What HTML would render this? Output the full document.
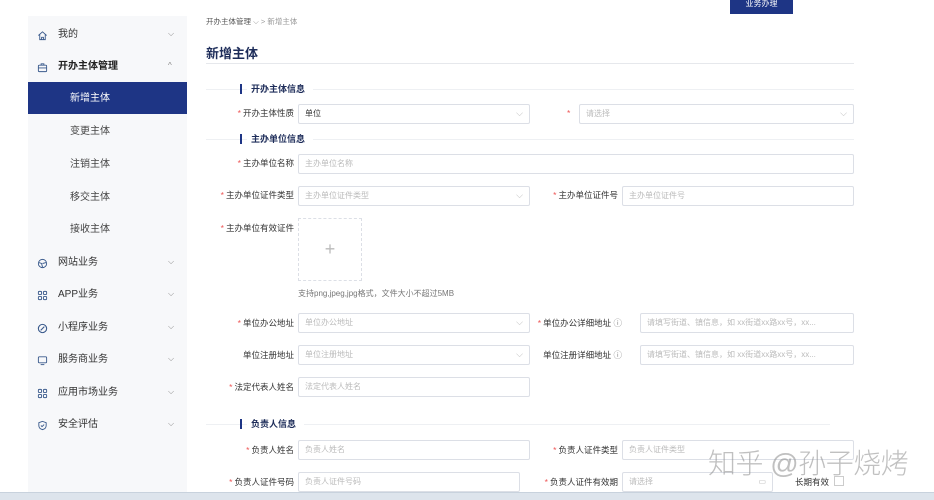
<!DOCTYPE html>
<html><head><meta charset="utf-8"><style>
*{margin:0;padding:0;box-sizing:border-box}
body{width:934px;height:500px;overflow:hidden;background:#fff;position:relative;font-family:"Liberation Sans","Noto Sans CJK SC",sans-serif;color:#333}
.a{position:absolute;white-space:nowrap}
.sb{position:absolute;left:28px;top:16px;width:159px;height:476px;background:#f7f8fa}
.mi{position:absolute;left:58px;font-size:10px;color:#333;line-height:14px;margin-top:2px}
.sub{position:absolute;left:70px;font-size:10px;color:#444;line-height:14px;margin-top:2px}
.ch{position:absolute;left:168px;font-size:8px;color:#888;margin-top:2px}
.ic{position:absolute;left:37px;width:11px;height:11px;margin-top:2px}
.lb{position:absolute;font-size:8.5px;color:#333;line-height:12px;text-align:right}
.lb i{color:#e55;font-style:normal;margin-right:2px}
.in{position:absolute;height:20px;border:1px solid #dcdfe6;border-radius:2px;font-size:8px;color:#bbb;padding-left:6px;line-height:18px;background:#fff}
.in.s::after{content:"⌵";position:absolute;right:6px;top:-1px;color:#bbb;font-size:9px}
.sec{position:absolute;left:206px;width:648px;height:1px;background:#eef0f3}
.st{position:absolute;font-size:9px;font-weight:bold;color:#1e2d5a;background:#fff;padding:0 8px 0 4px;line-height:12px}
.bar{position:absolute;width:2px;height:10px;background:#1e3585}
</style></head><body>
<div class="a" style="left:730px;top:0;width:63px;height:14px;background:#1e3585;color:#fff;font-size:8px;text-align:center;line-height:8px">业务办理</div>

<div class="sb"></div>
<svg class="ic" style="top:28px" viewBox="0 0 12 12" fill="none" stroke="#3a5a8c" stroke-width="1"><path d="M1.5 6L6 2l4.5 4M3 5v5.5h6V5M5 10.5V8h2v2.5"/></svg>
<div class="mi" style="top:26px">我的</div><div class="ch" style="top:27px">⌵</div>
<svg class="ic" style="top:60px" viewBox="0 0 12 12" fill="none" stroke="#3a5a8c" stroke-width="1"><rect x="1.5" y="3.5" width="9" height="7" rx="1"/><path d="M4.5 3.5V2h3v1.5M1.5 6.5h9"/></svg>
<div class="mi" style="top:58px;font-weight:bold;color:#222">开办主体管理</div><div class="ch" style="top:59px">^</div>
<div class="a" style="left:28px;top:82px;width:159px;height:32px;background:#1e3585"></div>
<div class="sub" style="top:90px;color:#fff">新增主体</div>
<div class="sub" style="top:123px">变更主体</div>
<div class="sub" style="top:156px">注销主体</div>
<div class="sub" style="top:189px">移交主体</div>
<div class="sub" style="top:221px">接收主体</div>
<svg class="ic" style="top:256px" viewBox="0 0 12 12" fill="none" stroke="#3a5a8c" stroke-width="1"><circle cx="6" cy="6" r="4.5"/><path d="M2 5l3 1 1 4M6 6l4-1"/></svg>
<div class="mi" style="top:254px">网站业务</div><div class="ch" style="top:255px">⌵</div>
<svg class="ic" style="top:288px" viewBox="0 0 12 12" fill="none" stroke="#3a5a8c" stroke-width="1"><rect x="1.5" y="1.5" width="3.5" height="3.5" rx="1"/><rect x="7" y="1.5" width="3.5" height="3.5" rx="1"/><rect x="1.5" y="7" width="3.5" height="3.5" rx="1"/><rect x="7" y="7" width="3.5" height="3.5" rx="1"/></svg>
<div class="mi" style="top:286px">APP业务</div><div class="ch" style="top:287px">⌵</div>
<svg class="ic" style="top:321px" viewBox="0 0 12 12" fill="none" stroke="#3a5a8c" stroke-width="1.2"><circle cx="6" cy="6" r="4.5"/><path d="M4 8l4-4"/></svg>
<div class="mi" style="top:319px">小程序业务</div><div class="ch" style="top:320px">⌵</div>
<svg class="ic" style="top:353px" viewBox="0 0 12 12" fill="none" stroke="#3a5a8c" stroke-width="1"><rect x="1.5" y="2" width="9" height="6.5" rx="1"/><path d="M4 10.5h4"/></svg>
<div class="mi" style="top:351px">服务商业务</div><div class="ch" style="top:352px">⌵</div>
<svg class="ic" style="top:386px" viewBox="0 0 12 12" fill="none" stroke="#3a5a8c" stroke-width="1"><rect x="1.5" y="1.5" width="3.5" height="3.5" rx="1"/><rect x="7" y="1.5" width="3.5" height="3.5" rx="1"/><rect x="1.5" y="7" width="3.5" height="3.5" rx="1"/><rect x="7" y="7" width="3.5" height="3.5" rx="1"/></svg>
<div class="mi" style="top:384px">应用市场业务</div><div class="ch" style="top:385px">⌵</div>
<svg class="ic" style="top:418px" viewBox="0 0 12 12" fill="none" stroke="#3a5a8c" stroke-width="1"><path d="M6 1.5l4 1.5v3c0 2.5-2 4-4 4.5C4 10 2 8.5 2 6V3z"/><path d="M4.3 6l1.2 1.2L7.8 5"/></svg>
<div class="mi" style="top:416px">安全评估</div><div class="ch" style="top:417px">⌵</div>

<div class="a" style="left:206px;top:16px;font-size:7.5px;color:#555">开办主体管理 <span style="color:#999">⌵ &gt;</span> <span style="color:#999">新增主体</span></div>
<div class="a" style="left:206px;top:43px;font-size:13px;font-weight:bold;color:#1e2d5a">新增主体</div>
<div class="a" style="left:206px;top:63px;width:648px;height:1px;background:#e6e8ec"></div>

<div class="sec" style="top:89px"></div><div class="bar" style="left:240px;top:84px"></div><div class="st" style="left:247px;top:83px">开办主体信息</div>
<div class="lb" style="right:640px;top:107px"><i>*</i>开办主体性质</div>
<div class="in s" style="left:298px;top:104px;width:232px;color:#333">单位</div>
<div class="lb" style="left:567px;top:107px"><i>*</i></div>
<div class="in s" style="left:579px;top:104px;width:275px">请选择</div>

<div class="sec" style="top:139px"></div><div class="bar" style="left:240px;top:134px"></div><div class="st" style="left:247px;top:133px">主办单位信息</div>
<div class="lb" style="right:640px;top:157px"><i>*</i>主办单位名称</div>
<div class="in" style="left:298px;top:154px;width:556px">主办单位名称</div>
<div class="lb" style="right:640px;top:189px"><i>*</i>主办单位证件类型</div>
<div class="in s" style="left:298px;top:186px;width:232px">主办单位证件类型</div>
<div class="lb" style="right:316px;top:189px"><i>*</i>主办单位证件号</div>
<div class="in" style="left:622px;top:186px;width:232px">主办单位证件号</div>
<div class="lb" style="right:640px;top:222px"><i>*</i>主办单位有效证件</div>
<div class="a" style="left:298px;top:218px;width:64px;height:63px;border:1px dashed #dcdfe6;color:#bbb;font-size:18px;text-align:center;line-height:60px;font-weight:200">+</div>
<div class="a" style="left:298px;top:288px;font-size:8px;color:#777">支持png,jpeg,jpg格式，文件大小不超过5MB</div>

<div class="lb" style="right:640px;top:317px"><i>*</i>单位办公地址</div>
<div class="in s" style="left:298px;top:313px;width:232px">单位办公地址</div>
<div class="lb" style="right:312px;top:317px"><i>*</i>单位办公详细地址 <span style="color:#888">ⓘ</span></div>
<div class="in" style="left:640px;top:313px;width:214px">请填写街道、镇信息，如 xx街道xx路xx号，xx...</div>
<div class="lb" style="right:640px;top:349px">单位注册地址</div>
<div class="in s" style="left:298px;top:345px;width:232px">单位注册地址</div>
<div class="lb" style="right:312px;top:349px">单位注册详细地址 <span style="color:#888">ⓘ</span></div>
<div class="in" style="left:640px;top:345px;width:214px">请填写街道、镇信息，如 xx街道xx路xx号，xx...</div>
<div class="lb" style="right:640px;top:381px"><i>*</i>法定代表人姓名</div>
<div class="in" style="left:298px;top:377px;width:232px">法定代表人姓名</div>

<div class="sec" style="top:424px;width:624px"></div><div class="bar" style="left:240px;top:419px"></div><div class="st" style="left:247px;top:418px">负责人信息</div>
<div class="lb" style="right:640px;top:444px"><i>*</i>负责人姓名</div>
<div class="in" style="left:298px;top:440px;width:232px">负责人姓名</div>
<div class="lb" style="right:316px;top:444px"><i>*</i>负责人证件类型</div>
<div class="in" style="left:622px;top:440px;width:232px">负责人证件类型</div>
<div class="lb" style="right:640px;top:476px"><i>*</i>负责人证件号码</div>
<div class="in" style="left:298px;top:472px;width:222px">负责人证件号码</div>
<div class="lb" style="right:316px;top:476px"><i>*</i>负责人证件有效期</div>
<div class="in" style="left:622px;top:472px;width:151px">请选择<span style="position:absolute;right:6px;color:#bbb">▭</span></div>
<div class="lb" style="left:795px;top:476px">长期有效</div>
<div class="a" style="left:834px;top:476px;width:10px;height:10px;border:1px solid #ccc"></div>

<div class="a" style="left:708px;top:442px;font-size:28px;color:rgba(140,140,140,0.55);font-weight:200;letter-spacing:-0.5px">知乎 @孙子烧烤</div>
<div class="a" style="left:0;top:492px;width:934px;height:8px;background:#dde4ec;border-top:1px solid #c8d2dd"></div>
</body></html>
